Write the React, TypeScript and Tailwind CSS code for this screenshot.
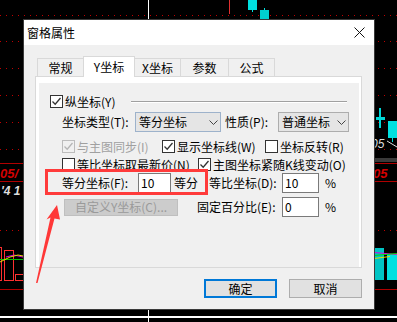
import type { ReactNode } from "react";

function Check({ checked = false, disabled = false }: { checked?: boolean; disabled?: boolean }) {
  return (
    <span
      className={`flex h-[13px] w-[13px] shrink-0 items-center justify-center border ${
        disabled ? "border-[#bcbcbc] bg-[#f0f0f0]" : "border-[#333333] bg-white"
      }`}
    >
      {checked && (
        <svg width="11" height="11" viewBox="0 0 11 11">
          <path
            d="M1.5 5.5 L4.2 8.2 L9.5 2"
            fill="none"
            stroke={disabled ? "#b5b5b5" : "#333333"}
            strokeWidth="1.3"
          />
        </svg>
      )}
    </span>
  );
}

function Option({
  label,
  checked,
  disabled,
  width,
}: {
  label: string;
  checked?: boolean;
  disabled?: boolean;
  width?: string;
}) {
  return (
    <div className={`flex items-center gap-[2px] ${width ?? ""}`}>
      <Check checked={checked} disabled={disabled} />
      <span className={`whitespace-nowrap ${disabled ? "text-[#a0a0a0]" : ""}`}>{label}</span>
    </div>
  );
}

function Select({ value, width, focus }: { value: string; width: string; focus?: boolean }) {
  return (
    <div
      className={`flex h-[20px] items-center justify-between border bg-[#e5e5e5] pl-[3px] pr-[2px] ${width} ${
        focus ? "border-[#9db2cb]" : "border-[#adadad]"
      }`}
    >
      <span className="whitespace-nowrap">{value}</span>
      <svg width="9" height="5" viewBox="0 0 9 5">
        <path d="M0.5 0.5 L4.5 4.5 L8.5 0.5" fill="none" stroke="#444" strokeWidth="1" />
      </svg>
    </div>
  );
}

function Field({ value, width }: { value: string; width: string }) {
  return (
    <div className={`flex h-[20px] items-center border border-[#7a7a7a] bg-white pl-[2px] ${width}`}>
      {value}
    </div>
  );
}

function Tab({ children, className }: { children: ReactNode; className: string }) {
  return (
    <div className={`flex items-center justify-center border-[#d9d9d9] ${className}`}>{children}</div>
  );
}

function Chart() {
  const dotted = [15, 41, 68, 95, 122, 149, 230];
  return (
    <svg width="397" height="322" className="absolute left-0 top-0">
      <rect width="397" height="322" fill="#000" />
      {dotted.map((y) => (
        <line key={y} x1="0" x2="397" y1={y + 0.5} y2={y + 0.5} stroke="#c00000" strokeDasharray="1 5" />
      ))}
      <line x1="0" x2="397" y1="163.5" y2="163.5" stroke="#b00000" />
      <line x1="0" x2="397" y1="181.5" y2="181.5" stroke="#b00000" />
      <line x1="0" x2="397" y1="289.5" y2="289.5" stroke="#b00000" />
      <rect x="374" y="158" width="23" height="4" fill="#3a3a3a" />
      <rect x="0" y="316" width="397" height="2" fill="#fff" />
      <rect x="148" y="0" width="1" height="19" fill="#fff" />
      <rect x="148" y="309" width="1" height="13" fill="#fff" />
      <line x1="229.5" x2="229.5" y1="0" y2="14" stroke="#e03030" />
      <rect x="248" y="0" width="9" height="10" fill="#00e0e0" />
      <rect x="252" y="10" width="1" height="2" fill="#00e0e0" />
      <rect x="260" y="10" width="9" height="9" fill="#00d0d0" />
      <rect x="264" y="8" width="1" height="2" fill="#00e0e0" />
      <rect x="376" y="117" width="9" height="3" fill="#00d8d8" />
      <rect x="379" y="108" width="2" height="20" fill="#00d8d8" />
      <rect x="388" y="121" width="9" height="17" fill="#00e0e0" />
      <rect x="392" y="138" width="1" height="4" fill="#00e0e0" />
      <text x="371" y="148" fontSize="12" fontStyle="italic" fill="#ddd" fontFamily="Liberation Sans, sans-serif">
        05
      </text>
      <line x1="387" y1="141" x2="397" y2="147" stroke="#ddd" />
      <text
        x="0"
        y="178"
        fontSize="13"
        fontWeight="bold"
        fontStyle="italic"
        fill="#d40000"
        fontFamily="Liberation Sans, sans-serif"
      >
        05/
      </text>
      <text
        x="373"
        y="178"
        fontSize="13"
        fontWeight="bold"
        fontStyle="italic"
        fill="#d40000"
        fontFamily="Liberation Sans, sans-serif"
      >
        05
      </text>
      <text x="1" y="195" fontSize="12" fontWeight="bold" fontStyle="italic" fill="#ddd" fontFamily="Liberation Sans, sans-serif">
        '4 1
      </text>
      <rect x="-1.5" y="247.5" width="3" height="33" fill="none" stroke="#ff3030" />
      <rect x="4.5" y="250.5" width="9" height="30" fill="none" stroke="#ff3030" />
      <rect x="15.5" y="274.5" width="9" height="6" fill="none" stroke="#ff3030" />
      <line x1="0" x2="23" y1="259.5" y2="259.5" stroke="#00c000" />
      <polyline points="6,257 14,255 23,257" fill="none" stroke="#e000e0" />
      <polyline points="0,262 6,259 10,257 18,255 23,256" fill="none" stroke="#e0e000" />
      <rect x="374" y="248" width="10" height="32" fill="#00c4c4" />
      <rect x="387" y="254" width="10" height="26" fill="#00e0e0" />
      <line x1="374" x2="397" y1="252.5" y2="254.5" stroke="#e000e0" />
      <line x1="374" x2="397" y1="255.5" y2="253.5" stroke="#00e000" />
      <line x1="374" x2="390" y1="258.5" y2="256.5" stroke="#e0e000" />
    </svg>
  );
}

export default function App() {
  return (
    <div className="relative h-[322px] w-[397px] overflow-hidden bg-black font-['Noto_Sans_CJK_SC','Noto_Sans',sans-serif] text-[12px] leading-none text-black">
      <Chart />

      <div className="absolute left-[23px] top-[19px] flex h-[291px] w-[352px] flex-col border border-[#3a3a3a] bg-[#f0f0f0]">
        <div className="flex h-[25px] items-center justify-between bg-white pl-[3px] pr-[9px]">
          <span className="text-[12px]">窗格属性</span>
          <svg width="11" height="11" viewBox="0 0 11 11">
            <path d="M0.5 0.5 L10.5 10.5 M10.5 0.5 L0.5 10.5" stroke="#111" strokeWidth="1" />
          </svg>
        </div>

        <div className="flex flex-1 flex-col pl-[11px] pt-[11px]">
          <div className="ml-[2px] flex h-[20px] items-end">
            <Tab className="h-[18px] w-[46px] border-l border-t bg-[#f0f0f0]">常规</Tab>
            <Tab className="relative z-10 -mb-px h-[21px] w-[52px] border-x border-t bg-white">Y坐标</Tab>
            <Tab className="h-[18px] w-[45px] border-t bg-[#f0f0f0]">X坐标</Tab>
            <Tab className="h-[18px] w-[48px] border-l border-t bg-[#f0f0f0]">参数</Tab>
            <Tab className="h-[18px] w-[47px] border-x border-t bg-[#f0f0f0]">公式</Tab>
          </div>

          <div className="h-[192px] w-[327px] border border-[#d9d9d9] bg-white pl-[3px] pr-[2px] pt-[6px]">
            <div className="relative flex h-full flex-col bg-[#f0f0f0]">
              <div className="mt-[12px] flex h-[13px] items-center pl-[11px]">
                <Option label="纵坐标(Y)" checked />
                <div className="ml-[16px] mr-[12px] h-[2px] flex-1 border-t border-[#a0a0a0] border-b-white border-b" />
              </div>

              <div className="mt-[4px] flex h-[20px] items-center pl-[23px]">
                <span className="w-[73px] whitespace-nowrap">坐标类型(T):</span>
                <Select value="等分坐标" width="w-[86px]" focus />
                <span className="ml-[4px] w-[53px] whitespace-nowrap">性质(P):</span>
                <Select value="普通坐标" width="w-[71px]" />
              </div>

              <div className="mt-[8px] flex h-[13px] items-center pl-[23px]">
                <Option label="与主图同步(I)" checked disabled width="w-[100px]" />
                <Option label="显示坐标线(W)" checked width="w-[103px]" />
                <Option label="坐标反转(R)" />
              </div>

              <div className="mt-[5px] flex h-[13px] items-center pl-[23px]">
                <Option label="等比坐标取最新价(N)" width="w-[136px]" />
                <Option label="主图坐标紧随K线变动(O)" checked />
              </div>

              <div className="mt-[2px] flex h-[20px] items-center pl-[23px]">
                <div className="flex w-[147px] items-center">
                  <span className="w-[76px] whitespace-nowrap">等分坐标(F):</span>
                  <Field value="10" width="w-[33px]" />
                  <span className="ml-[3px]">等分</span>
                </div>
                <span className="w-[73px] whitespace-nowrap">等比坐标(D):</span>
                <Field value="10" width="w-[37px]" />
                <span className="ml-[6px]">%</span>
              </div>

              <div className="mt-[4px] flex h-[20px] items-center pl-[23px]">
                <div className="flex w-[135px] items-center">
                  <div className="ml-[2px] flex h-[17px] w-[114px] items-center justify-center border border-[#bfbfbf] bg-[#cccccc] text-[#9a9a9a]">
                    自定义Y坐标(C)...
                  </div>
                </div>
                <span className="w-[85px] whitespace-nowrap">固定百分比(E):</span>
                <Field value="0" width="w-[37px]" />
                <span className="ml-[6px]">%</span>
              </div>

              <div className="absolute left-[6px] top-[86px] h-[26px] w-[163px] border-[3px] border-[#ff3b3b]" />
            </div>
          </div>

          <div className="mt-[11px] flex justify-end gap-[12px] pr-[12px]">
            <div className="flex h-[19px] w-[73px] items-center justify-center border-2 border-[#0078d7] bg-[#e1e1e1]">
              确定
            </div>
            <div className="flex h-[19px] w-[73px] items-center justify-center border border-[#adadad] bg-[#e1e1e1]">
              取消
            </div>
          </div>
        </div>
      </div>

      <svg width="397" height="322" className="pointer-events-none absolute left-0 top-0">
        <polygon
          points="57,205 60,219.5 54.5,218.5 37.5,283 36,283 50.5,217.5 46.5,219.5"
          fill="#ff3838"
        />
      </svg>
    </div>
  );
}
